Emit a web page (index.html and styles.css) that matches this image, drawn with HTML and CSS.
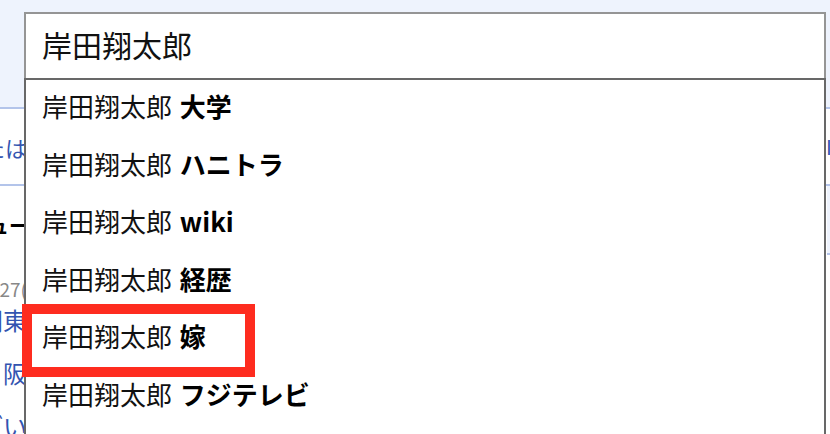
FILE: index.html
```html
<!DOCTYPE html>
<html lang="ja">
<head>
    <meta charset="UTF-8">
    <meta name="viewport" content="width=device-width, initial-scale=1.0">
    <title>岸田翔太郎 - 検索</title>
    <link rel="stylesheet" href="styles.css">
</head>
<body>
    <div class="page">
        <header class="masthead">
            <div class="crumbs">ニュース　天気　スポーツ　ファイナンス　エンタメ　ショッピング　知恵袋</div>
            <div class="search">
                <div class="search-box">岸田翔太郎</div>
                <ul class="suggest">
                    <li>岸田翔太郎 <b>大学</b></li>
                    <li>岸田翔太郎 <b>ハニトラ</b></li>
                    <li>岸田翔太郎 <b>wiki</b></li>
                    <li>岸田翔太郎 <b>経歴</b></li>
                    <li class="picked">岸田翔太郎 <b>嫁</b><span class="mark"></span></li>
                    <li>岸田翔太郎 <b>フジテレビ</b></li>
                </ul>
            </div>
        </header>

        <section class="row row-a">
            <div class="edge-left"><a class="link">キーワードまたは</a></div>
            <div class="edge-mid"></div>
            <div class="edge-right"><a class="link">ID</a></div>
        </section>

        <section class="row row-b">
            <div class="edge-left"><strong class="heading">トピックス ニュー</strong></div>
            <div class="edge-mid"></div>
            <div class="edge-right tinted"></div>
        </section>

        <section class="row row-c">
            <div class="edge-left">
                <div class="news">
                    <div class="date">1/27(</div>
                    <a class="link">関東</a>
                    <a class="link">大阪く阪</a>
                    <a class="link">ござい</a>
                </div>
            </div>
            <div class="edge-mid"></div>
            <div class="edge-right"></div>
        </section>
    </div>
</body>
</html>
```

FILE: styles.css
```css
body {
    margin: 0;
    font-family: "Noto Sans CJK JP", "Noto Sans", sans-serif;
    background-color: #fff;
    color: #111;
    overflow: hidden;
}
.page {
    width: 830px;
    height: 434px;
    overflow: hidden;
}
.masthead {
    display: flex;
    flex-direction: column;
    height: 107px;
    padding-left: 24px;
    background-color: #eef3fd;
    border-bottom: 2px solid #b3c4ea;
    position: relative;
    z-index: 2;
}
.crumbs {
    height: 20px;
    margin-top: -18px;
    margin-left: 116px;
    font-size: 15px;
    line-height: 20px;
    color: #5a75c0;
    white-space: nowrap;
    word-spacing: 30px;
}
.search {
    margin-top: 10px;
    width: 802px;
    position: relative;
}
.search-box {
    height: 61px;
    padding: 0 0 3px 16px;
    border: 2px solid #959595;
    border-bottom: 0;
    background-color: #fff;
    font-size: 30px;
    line-height: 61px;
    color: #111;
}
.suggest {
    position: absolute;
    top: 100%;
    left: 0;
    right: 0;
    margin: 0;
    padding: 0 0 60px;
    list-style: none;
    background-color: #fff;
    border: 2px solid #686868;
    border-bottom: 0;
}
.suggest li {
    position: relative;
    padding: 0 0 6.6px 16px;
    font-size: 26px;
    line-height: 51px;
    color: #111;
    white-space: nowrap;
}
.suggest b {
    margin-left: 2px;
    font-weight: 700;
    color: #000;
}
.mark {
    position: absolute;
    left: -4px;
    top: -6px;
    width: 213px;
    height: 53px;
    border: 10px solid #fe2c1f;
}
.row {
    display: flex;
}
.edge-left {
    width: 27px;
    flex: none;
    display: flex;
    justify-content: flex-end;
    white-space: nowrap;
}
.edge-mid {
    flex: 1;
}
.edge-right {
    width: 3px;
    flex: none;
    overflow: hidden;
    white-space: nowrap;
}
.link {
    color: #3354b0;
}
.row-a {
    height: 75px;
    align-items: center;
    border-bottom: 2px solid #b3c4ea;
}
.row-a .link {
    font-size: 22px;
}
.row-a .edge-right .link {
    font-size: 20px;
    margin-left: -1px;
}
.row-b {
    height: 69px;
}
.row-b .edge-left {
    padding-top: 27px;
    width: 29px;
}
.heading {
    font-size: 20px;
    line-height: 26px;
    color: #000;
}
.tinted {
    box-sizing: border-box;
    background-color: #eef3fd;
    border-bottom: 2px solid #b3c4ea;
}
.row-c .edge-left {
    padding-top: 21px;
}
.news {
    display: flex;
    flex-direction: column;
    align-items: flex-end;
}
.date {
    font-size: 19px;
    line-height: 26px;
    color: #888;
}
.news .link {
    font-size: 24px;
    line-height: 53px;
}
.news .date + .link {
    margin-top: -9px;
}
```
